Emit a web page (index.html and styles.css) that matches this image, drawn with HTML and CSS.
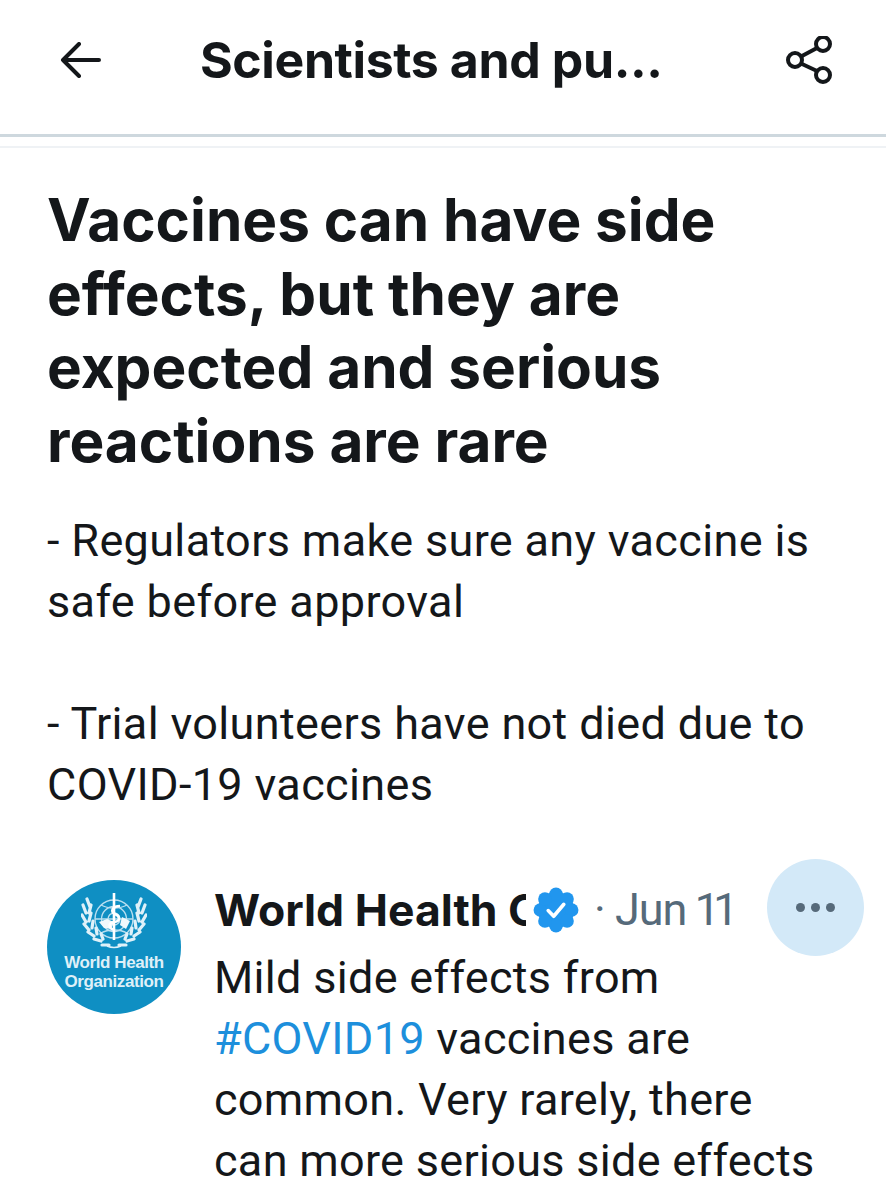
FILE: index.html
```html
<!DOCTYPE html>
<html lang="en">
<head>
<meta charset="utf-8">
<title>Scientists and public health</title>
<link rel="stylesheet" href="styles.css">
</head>
<body>
<div class="page">
  <header class="topbar">
    <svg class="back" viewBox="0 0 44 36" width="44" height="36"><path d="M40 18H4M20 2 4 18l16 16" fill="none" stroke="#14171a" stroke-width="4" stroke-linecap="round" stroke-linejoin="round"/></svg>
    <h2 class="bar-title">Scientists and pu...</h2>
    <svg class="share" viewBox="0 0 48 48" width="48" height="48"><g fill="none" stroke="#14171a" stroke-width="4"><circle cx="37" cy="8" r="7"/><circle cx="37" cy="39" r="7"/><circle cx="9" cy="24" r="7"/><path d="M31 12 15 20.500M15 27.500 31 35"/></g></svg>
  </header>
  <div class="rule"></div>
  <main class="content">
    <h1 class="headline">Vaccines can have side effects, but they are expected and serious reactions are rare</h1>
    <p class="desc">- Regulators make sure any vaccine is safe before approval</p>
    <p class="desc desc-next">- Trial volunteers have not died due to COVID-19 vaccines</p>
    <article class="tweet">
      <div class="avatar">
        <svg class="emblem" viewBox="0 0 66 57" width="66" height="57">
          <g fill="none" stroke="#b9dff0" stroke-width="1.400">
            <circle cx="33" cy="26" r="19"/><circle cx="33" cy="26" r="12.500"/><circle cx="33" cy="26" r="6"/>
            <path d="M14 26h38M20 12c7 4 19 4 26 0M20 40c7-4 19-4 26 0"/>
          </g>
          <g fill="none" stroke="#dff1f9" stroke-width="3.200" stroke-linecap="round">
            <path d="M9 14 6 6M5 20 2 12M8 20l2-8M5 29 1 22M8 28l2-8M8 37 3 31M11 35l1-7M13 43 7 39M16 41l-1-6M20 48l-7-2M22 46l-2-5M28 52h-7"/>
            <path d="M57 14l3-8M61 20l3-8M58 20l-2-8M61 29l4-7M58 28l-2-8M58 37l5-6M55 35l-1-7M53 43l6-4M50 41l1-6M46 48l7-2M44 46l2-5M38 52h7"/>
          </g>
          <path d="M18 29l8-3 7 3-3 7-7-1zM41 24l8 4-4 8-6-4z" fill="#f1f9fc"/>
          <path d="M33 0v47" stroke="#fff" stroke-width="2.600"/>
          <path d="M39 13c-8 0-10 6-5 8s6 7-1 8-5 7 1 8" fill="none" stroke="#fff" stroke-width="2.600"/>
          <path d="M26 53q7 3 14 0" fill="none" stroke="#dff1f9" stroke-width="1.500"/>
        </svg>
        <div class="org">World Health<br>Organization</div>
      </div>
      <div class="tweet-body">
        <div class="tweet-head">
          <span class="name">World Health Organization</span>
          <svg class="badge" viewBox="0 0 46 46" width="48" height="48"><g fill="#2196ee"><circle cx="23" cy="23" r="17.500"/><circle cx="23" cy="8" r="6.500"/><circle cx="23" cy="38" r="6.500"/><circle cx="8" cy="23" r="6.500"/><circle cx="38" cy="23" r="6.500"/><circle cx="12.400" cy="12.400" r="6.500"/><circle cx="33.600" cy="12.400" r="6.500"/><circle cx="12.400" cy="33.600" r="6.500"/><circle cx="33.600" cy="33.600" r="6.500"/></g><path d="M15.500 23.500 20.800 29 30.500 17.500" fill="none" stroke="#fff" stroke-width="3.400" stroke-linecap="round" stroke-linejoin="round"/></svg>
          <span class="meta">· Jun 11</span>
        </div>
        <p class="tweet-text">Mild side effects from <a class="tag">#COVID19</a> vaccines are common. Very rarely, there can more serious side effects</p>
      </div>
      <div class="more"><i></i><i></i><i></i></div>
    </article>
  </main>
</div>
</body>
</html>
```
FILE: styles.css
```css
* { box-sizing: border-box; }
html, body { margin: 0; height: 1200px; overflow: hidden; background: #fff; }
.page { width: 886px; height: 1200px; overflow: hidden; color: #14171a; font-family: Roboto, "Liberation Sans", sans-serif; }
.topbar { height: 134px; display: flex; align-items: center; padding: 0 52px 14px 59px; }
.back { flex: none; width: 44px; height: 36px; }
.bar-title { margin: 0 0 0 97px; flex: 1; font: 700 50px/60px Inter, sans-serif; letter-spacing: -.4px; color: #14171a; white-space: nowrap; }
.share { flex: none; }
.rule { height: 14px; border-top: 3px solid #ced8de; border-bottom: 2px solid #eff2f5; }
.content { padding: 35px 0 0 47px; }
.headline { margin: 0; width: 720px; font: 700 58.500px/73.500px Inter, sans-serif; font-variant-ligatures: none; color: #14171a; }
.desc { margin: 33px 0 0; width: 790px; font: 400 45px/61px Roboto, sans-serif; letter-spacing: .35px; color: #14171a; }
.desc-next { margin-top: 61px; }
.tweet { position: relative; display: flex; margin-top: 65px; }
.avatar { flex: none; width: 134px; height: 134px; border-radius: 50%; background: #0f8fc3; display: flex; flex-direction: column; align-items: center; padding-top: 13px; }
.emblem { flex: none; }
.org { margin-top: 3px; font: 700 17px/19px "Liberation Sans", sans-serif; text-align: center; color: #dff0f8; letter-spacing: -.4px; }
.tweet-body { margin-left: 33px; width: 620px; }
.tweet-head { height: 60px; display: flex; align-items: center; }
.name { flex: none; width: 312px; overflow: hidden; font: 700 44.500px/60px Inter, sans-serif; color: #14171a; white-space: nowrap; }
.badge { flex: none; margin-left: 6px; }
.meta { margin-left: 14px; font: 400 45px/60px Roboto, sans-serif; font-variant-numeric: proportional-nums; letter-spacing: -1px; color: #566a7a; white-space: nowrap; }
.tweet-text { margin: 7px 0 0; font: 400 45px/61px Roboto, sans-serif; letter-spacing: .3px; color: #14171a; }
.tag { color: #1d8fdc; }
.more { position: absolute; left: 720px; top: -21px; width: 97px; height: 97px; border-radius: 50%; background: #d3e9f8; display: flex; align-items: center; justify-content: center; gap: 6px; }
.more i { width: 9px; height: 9px; border-radius: 50%; background: #566a7a; }
```
